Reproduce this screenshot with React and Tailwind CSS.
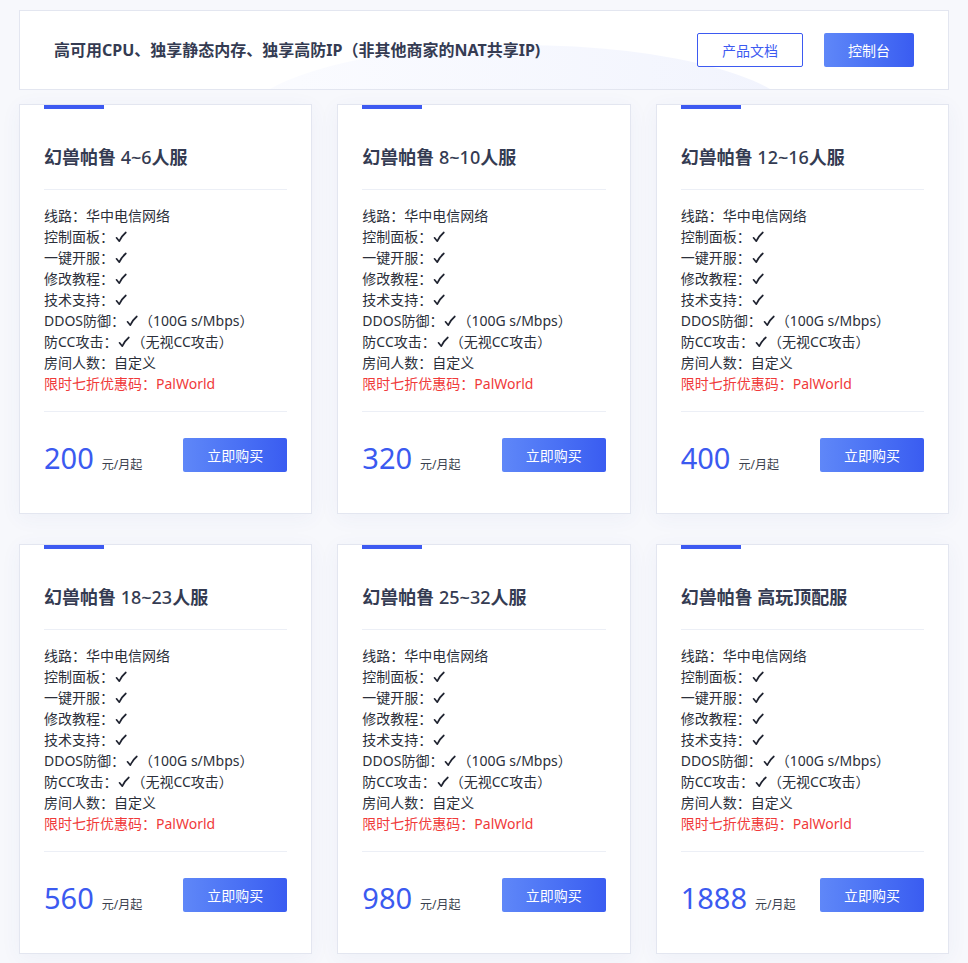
import React from "react";

const plans = [
  { name: "幻兽帕鲁", tag: "4~6人服", price: "200" },
  { name: "幻兽帕鲁", tag: "8~10人服", price: "320" },
  { name: "幻兽帕鲁", tag: "12~16人服", price: "400" },
  { name: "幻兽帕鲁", tag: "18~23人服", price: "560" },
  { name: "幻兽帕鲁", tag: "25~32人服", price: "980" },
  { name: "幻兽帕鲁", tag: "高玩顶配服", price: "1888" },
];

const Check = () => (
  <svg
    className="inline-block align-[-1px] mx-[1px]"
    width="12"
    height="12"
    viewBox="0 0 12 12"
    fill="none"
    stroke="#1f2330"
    strokeWidth="1.7"
    strokeLinecap="round"
    strokeLinejoin="round"
  >
    <path d="M1.5 6.8 L4.3 10.2 C6 6.5 8 3.8 10.8 1.5" />
  </svg>
);

const features = [
  ["线路：华中电信网络"],
  ["控制面板：", true],
  ["一键开服：", true],
  ["修改教程：", true],
  ["技术支持：", true],
  ["DDOS防御：", true, "（100G s/Mbps）"],
  ["防CC攻击：", true, "（无视CC攻击）"],
  ["房间人数：自定义"],
];

const PlanCard = ({ plan }) => {
  // split latin/digit part from chinese so the digits can be lighter
  const parts = plan.tag.match(/^([0-9~]*)(.*)$/);
  return (
    <div className="bg-white border border-[#e3e6f0] shadow-[0_4px_20px_rgba(60,80,160,0.05)] px-[24px]">
      <div className="w-[60px] h-[4px] bg-[#3d5af1]" />
      <div className="pt-[35px] pb-[19px] border-b border-[#eceff6]">
        <h3 className="text-[18px] leading-[26px] font-bold text-[#343b52]">
          {plan.name}{" "}
          {parts[1] && <span className="font-medium">{parts[1]}</span>}
          {parts[2]}
        </h3>
      </div>
      <div className="pt-[15px] pb-[17px] border-b border-[#eceff6] text-[14px] leading-[21px] text-[#2b2f3a]">
        {features.map((f, i) => (
          <div key={i} className="h-[21px]">
            {f[0]}
            {f[1] && <Check />}
            {f[2]}
          </div>
        ))}
        <div className="text-[#f03a3a]">限时七折优惠码：PalWorld</div>
      </div>
      <div className="pt-[26px] pb-[41px] flex items-center justify-between">
        <div className="flex items-baseline h-[34px] translate-y-[3px]">
          <span className="text-[29px] leading-[34px] text-[#3b5af0]">
            {plan.price}
          </span>
          <span className="ml-[8px] text-[12px] text-[#3a3f4d]">元/月起</span>
        </div>
        <button className="w-[104px] h-[34px] rounded-[2px] bg-gradient-to-r from-[#5f87f8] to-[#3a5cf1] text-white text-[14px]">
          立即购买
        </button>
      </div>
    </div>
  );
};

const App = () => {
  return (
    <div
      className="min-h-[963px] bg-[#f7f8fc] pt-[10px] pl-[19px] pr-[19px] pb-[10px]"
      style={{ fontFamily: '"Noto Sans", "Noto Sans CJK SC", sans-serif' }}
    >
      {/* top banner */}
      <div className="relative overflow-hidden h-[80px] bg-white border border-[#e3e6f0] flex items-center justify-between pl-[34px] pr-[34px]">
        <div className="absolute left-[220px] top-[34px] w-[560px] h-[160px] rounded-[50%] bg-gradient-to-r from-[#fafbff] to-[#eef1fd] opacity-80" />
        <p className="relative text-[16px] font-bold text-[#343b52]">
          高可用CPU、独享静态内存、独享高防IP（非其他商家的NAT共享IP)
        </p>
        <div className="relative flex gap-[21px]">
          <button className="w-[106px] h-[34px] border border-[#3d5af1] rounded-[2px] bg-white text-[#3d5af1] text-[14px]">
            产品文档
          </button>
          <button className="w-[90px] h-[34px] rounded-[2px] bg-gradient-to-r from-[#5f87f8] to-[#3a5cf1] text-white text-[14px]">
            控制台
          </button>
        </div>
      </div>

      <div className="mt-[14px] grid grid-cols-3 gap-x-[25px] gap-y-[30px]">
        {plans.map((p, i) => (
          <PlanCard key={i} plan={p} />
        ))}
      </div>
    </div>
  );
};

export default App;
